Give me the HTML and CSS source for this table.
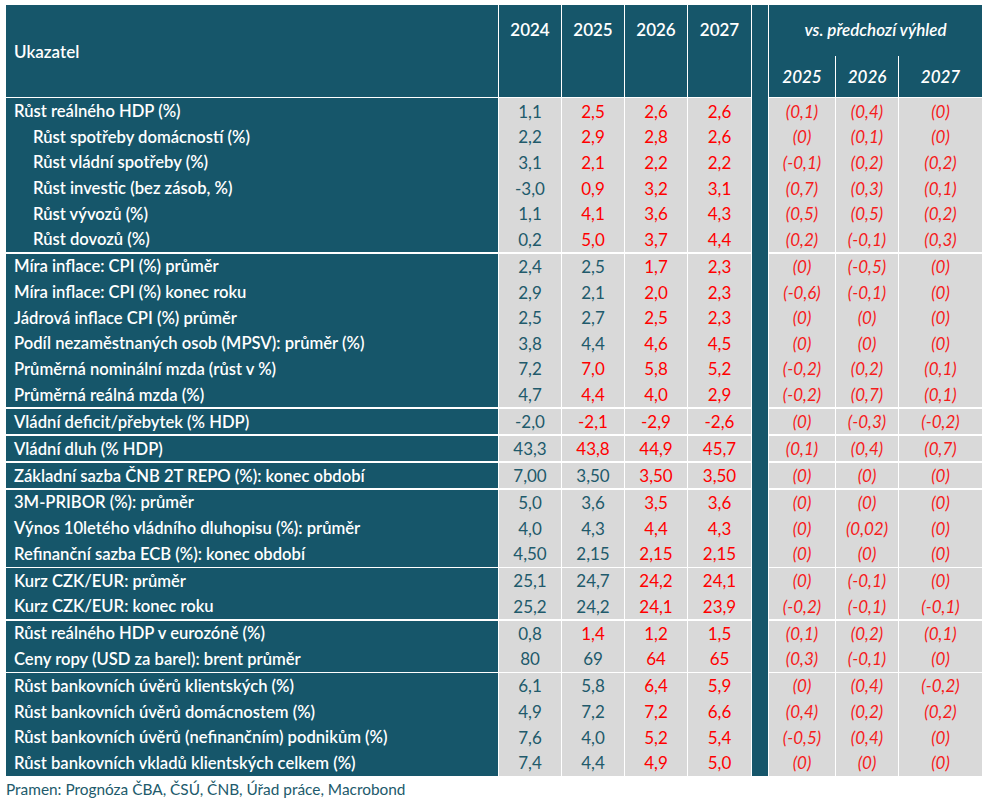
FILE: index.html
```html
<!DOCTYPE html>
<html lang="cs">
<head>
<meta charset="utf-8">
<title>Prognóza ČBA</title>
<link rel="stylesheet" href="styles.css">
</head>
<body>
<div class="page">
  <div class="tbl">
    <div class="head">
      <div class="hc lab-h">Ukazatel</div>
      <div class="hc yr">2024</div>
      <div class="hc yr">2025</div>
      <div class="hc yr">2026</div>
      <div class="hc yr">2027</div>
      <div class="hc sp"></div>
      <div class="hc vs">
        <div class="vs-t">vs. předchozí výhled</div>
        <div class="vs-sub"><div>2025</div><div>2026</div><div>2027</div></div>
      </div>
    </div>

    <div class="grp">
      <div class="row"><div class="c lab">Růst reálného HDP (%)</div><div class="c n">1,1</div><div class="c n r">2,5</div><div class="c n r">2,6</div><div class="c n r">2,6</div><div class="c sp"></div><div class="c d">(0,1)</div><div class="c d">(0,4)</div><div class="c d">(0)</div></div>
      <div class="row"><div class="c lab ind">Růst spotřeby domácností (%)</div><div class="c n">2,2</div><div class="c n r">2,9</div><div class="c n r">2,8</div><div class="c n r">2,6</div><div class="c sp"></div><div class="c d">(0)</div><div class="c d">(0,1)</div><div class="c d">(0)</div></div>
      <div class="row"><div class="c lab ind">Růst vládní spotřeby (%)</div><div class="c n">3,1</div><div class="c n r">2,1</div><div class="c n r">2,2</div><div class="c n r">2,2</div><div class="c sp"></div><div class="c d">(-0,1)</div><div class="c d">(0,2)</div><div class="c d">(0,2)</div></div>
      <div class="row"><div class="c lab ind">Růst investic (bez zásob, %)</div><div class="c n">-3,0</div><div class="c n r">0,9</div><div class="c n r">3,2</div><div class="c n r">3,1</div><div class="c sp"></div><div class="c d">(0,7)</div><div class="c d">(0,3)</div><div class="c d">(0,1)</div></div>
      <div class="row"><div class="c lab ind">Růst vývozů (%)</div><div class="c n">1,1</div><div class="c n r">4,1</div><div class="c n r">3,6</div><div class="c n r">4,3</div><div class="c sp"></div><div class="c d">(0,5)</div><div class="c d">(0,5)</div><div class="c d">(0,2)</div></div>
      <div class="row"><div class="c lab ind">Růst dovozů (%)</div><div class="c n">0,2</div><div class="c n r">5,0</div><div class="c n r">3,7</div><div class="c n r">4,4</div><div class="c sp"></div><div class="c d">(0,2)</div><div class="c d">(-0,1)</div><div class="c d">(0,3)</div></div>
    </div>

    <div class="grp">
      <div class="row"><div class="c lab">Míra inflace: CPI (%) průměr</div><div class="c n">2,4</div><div class="c n">2,5</div><div class="c n r">1,7</div><div class="c n r">2,3</div><div class="c sp"></div><div class="c d">(0)</div><div class="c d">(-0,5)</div><div class="c d">(0)</div></div>
      <div class="row"><div class="c lab">Míra inflace: CPI (%) konec roku</div><div class="c n">2,9</div><div class="c n">2,1</div><div class="c n r">2,0</div><div class="c n r">2,3</div><div class="c sp"></div><div class="c d">(-0,6)</div><div class="c d">(-0,1)</div><div class="c d">(0)</div></div>
      <div class="row"><div class="c lab">Jádrová inflace CPI (%) průměr</div><div class="c n">2,5</div><div class="c n">2,7</div><div class="c n r">2,5</div><div class="c n r">2,3</div><div class="c sp"></div><div class="c d">(0)</div><div class="c d">(0)</div><div class="c d">(0)</div></div>
      <div class="row"><div class="c lab">Podíl nezaměstnaných osob (MPSV): průměr (%)</div><div class="c n">3,8</div><div class="c n">4,4</div><div class="c n r">4,6</div><div class="c n r">4,5</div><div class="c sp"></div><div class="c d">(0)</div><div class="c d">(0)</div><div class="c d">(0)</div></div>
      <div class="row"><div class="c lab">Průměrná nominální mzda (růst v %)</div><div class="c n">7,2</div><div class="c n r">7,0</div><div class="c n r">5,8</div><div class="c n r">5,2</div><div class="c sp"></div><div class="c d">(-0,2)</div><div class="c d">(0,2)</div><div class="c d">(0,1)</div></div>
      <div class="row"><div class="c lab">Průměrná reálná mzda (%)</div><div class="c n">4,7</div><div class="c n r">4,4</div><div class="c n r">4,0</div><div class="c n r">2,9</div><div class="c sp"></div><div class="c d">(-0,2)</div><div class="c d">(0,7)</div><div class="c d">(0,1)</div></div>
    </div>

    <div class="grp">
      <div class="row"><div class="c lab">Vládní deficit/přebytek (% HDP)</div><div class="c n">-2,0</div><div class="c n r">-2,1</div><div class="c n r">-2,9</div><div class="c n r">-2,6</div><div class="c sp"></div><div class="c d">(0)</div><div class="c d">(-0,3)</div><div class="c d">(-0,2)</div></div>
    </div>

    <div class="grp">
      <div class="row"><div class="c lab">Vládní dluh (% HDP)</div><div class="c n">43,3</div><div class="c n r">43,8</div><div class="c n r">44,9</div><div class="c n r">45,7</div><div class="c sp"></div><div class="c d">(0,1)</div><div class="c d">(0,4)</div><div class="c d">(0,7)</div></div>
    </div>

    <div class="grp">
      <div class="row"><div class="c lab">Základní sazba ČNB 2T REPO (%): konec období</div><div class="c n">7,00</div><div class="c n">3,50</div><div class="c n r">3,50</div><div class="c n r">3,50</div><div class="c sp"></div><div class="c d">(0)</div><div class="c d">(0)</div><div class="c d">(0)</div></div>
    </div>

    <div class="grp">
      <div class="row"><div class="c lab">3M-PRIBOR (%): průměr</div><div class="c n">5,0</div><div class="c n">3,6</div><div class="c n r">3,5</div><div class="c n r">3,6</div><div class="c sp"></div><div class="c d">(0)</div><div class="c d">(0)</div><div class="c d">(0)</div></div>
      <div class="row"><div class="c lab">Výnos 10letého vládního dluhopisu (%): průměr</div><div class="c n">4,0</div><div class="c n">4,3</div><div class="c n r">4,4</div><div class="c n r">4,3</div><div class="c sp"></div><div class="c d">(0)</div><div class="c d">(0,02)</div><div class="c d">(0)</div></div>
      <div class="row"><div class="c lab">Refinanční sazba ECB (%): konec období</div><div class="c n">4,50</div><div class="c n">2,15</div><div class="c n r">2,15</div><div class="c n r">2,15</div><div class="c sp"></div><div class="c d">(0)</div><div class="c d">(0)</div><div class="c d">(0)</div></div>
    </div>

    <div class="grp">
      <div class="row"><div class="c lab">Kurz CZK/EUR: průměr</div><div class="c n">25,1</div><div class="c n">24,7</div><div class="c n r">24,2</div><div class="c n r">24,1</div><div class="c sp"></div><div class="c d">(0)</div><div class="c d">(-0,1)</div><div class="c d">(0)</div></div>
      <div class="row"><div class="c lab">Kurz CZK/EUR: konec roku</div><div class="c n">25,2</div><div class="c n">24,2</div><div class="c n r">24,1</div><div class="c n r">23,9</div><div class="c sp"></div><div class="c d">(-0,2)</div><div class="c d">(-0,1)</div><div class="c d">(-0,1)</div></div>
    </div>

    <div class="grp">
      <div class="row"><div class="c lab">Růst reálného HDP v eurozóně (%)</div><div class="c n">0,8</div><div class="c n r">1,4</div><div class="c n r">1,2</div><div class="c n r">1,5</div><div class="c sp"></div><div class="c d">(0,1)</div><div class="c d">(0,2)</div><div class="c d">(0,1)</div></div>
      <div class="row"><div class="c lab">Ceny ropy (USD za barel): brent průměr</div><div class="c n">80</div><div class="c n">69</div><div class="c n r">64</div><div class="c n r">65</div><div class="c sp"></div><div class="c d">(0,3)</div><div class="c d">(-0,1)</div><div class="c d">(0)</div></div>
    </div>

    <div class="grp">
      <div class="row"><div class="c lab">Růst bankovních úvěrů klientských (%)</div><div class="c n">6,1</div><div class="c n">5,8</div><div class="c n r">6,4</div><div class="c n r">5,9</div><div class="c sp"></div><div class="c d">(0)</div><div class="c d">(0,4)</div><div class="c d">(-0,2)</div></div>
      <div class="row"><div class="c lab">Růst bankovních úvěrů domácnostem (%)</div><div class="c n">4,9</div><div class="c n">7,2</div><div class="c n r">7,2</div><div class="c n r">6,6</div><div class="c sp"></div><div class="c d">(0,4)</div><div class="c d">(0,2)</div><div class="c d">(0,2)</div></div>
      <div class="row"><div class="c lab">Růst bankovních úvěrů (nefinančním) podnikům (%)</div><div class="c n">7,6</div><div class="c n">4,0</div><div class="c n r">5,2</div><div class="c n r">5,4</div><div class="c sp"></div><div class="c d">(-0,5)</div><div class="c d">(0,4)</div><div class="c d">(0)</div></div>
      <div class="row"><div class="c lab">Růst bankovních vkladů klientských celkem (%)</div><div class="c n">7,4</div><div class="c n">4,4</div><div class="c n r">4,9</div><div class="c n r">5,0</div><div class="c sp"></div><div class="c d">(0)</div><div class="c d">(0)</div><div class="c d">(0)</div></div>
    </div>
  </div>
  <p class="src">Pramen: Prognóza ČBA, ČSÚ, ČNB, Úřad práce, Macrobond</p>
</div>
</body>
</html>
```

FILE: styles.css
```css
html, body {
  margin: 0;
  padding: 0;
  background: #ffffff;
}

body {
  font-family: Lato, "Open Sans", "DejaVu Sans", sans-serif;
  font-size: 17px;
}

.page {
  padding: 5px 0 0 6px;
}

.tbl {
  width: 976px;
  background: linear-gradient(to right, #ffffff 746px, #16566a 746px, #16566a 762px, #ffffff 762px);
}

.head,
.row {
  display: grid;
  grid-template-columns: 492px 62px 62px 62px 63px 16px 66px 62px 83px;
  column-gap: 1px;
}

.head {
  height: 92px;
}

.hc {
  background: #16566a;
  color: #ffffff;
  font-weight: 600;
}

.lab-h {
  display: flex;
  align-items: center;
  padding-left: 8px;
}

.yr {
  text-align: center;
  line-height: 50px;
}

.vs {
  grid-column: span 3;
  display: flex;
  flex-direction: column;
  background: #16566a;
}

.vs-t {
  height: 51px;
  line-height: 50px;
  text-align: center;
  font-style: italic;
}

.vs-sub {
  flex: 1;
  display: grid;
  grid-template-columns: 66px 62px 83px;
  column-gap: 1px;
  background: #ffffff;
}

.vs-sub div {
  background: #16566a;
  display: flex;
  align-items: center;
  justify-content: center;
  font-style: italic;
}

.grp {
  margin-top: 1.3px;
}

.c {
  height: 25.67px;
  display: flex;
  align-items: center;
  white-space: nowrap;
}

.lab {
  background: #16566a;
  color: #ffffff;
  padding-left: 8px;
  font-weight: 600;
  font-size: 16.6px;
}

.lab.ind {
  padding-left: 27px;
}

.n {
  background: #d9d9d9;
  color: #215a6b;
  justify-content: center;
}

.n.r {
  color: #ff0000;
}

.sp {
  background: #16566a;
}

.d {
  background: #d9d9d9;
  color: #f51c1c;
  justify-content: center;
  font-style: italic;
}

.src {
  margin: 0;
  height: 26px;
  line-height: 26px;
  color: #215a6b;
  font-size: 15.4px;
}
```
